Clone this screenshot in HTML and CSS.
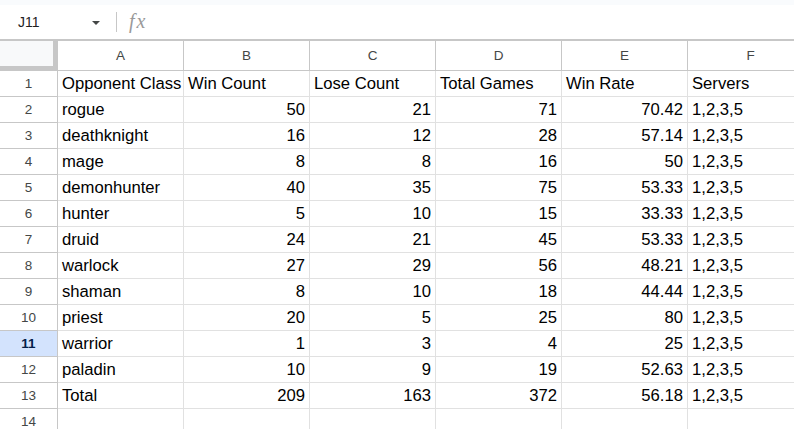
FILE: index.html
```html
<!DOCTYPE html>
<html lang="en">
<head>
    <meta charset="UTF-8">
    <title>Opponent Stats</title>
    <link rel="stylesheet" href="styles.css">
</head>
<body>
    <div class="top-strip"></div>
    <div class="formula-bar">
        <div class="name-box">J11</div>
        <div class="name-arrow"></div>
        <div class="bar-sep"></div>
        <div class="fx">fx</div>
    </div>
    <div class="sheet">
        <div class="corner"></div>
        <div class="col-head">A</div>
        <div class="col-head">B</div>
        <div class="col-head">C</div>
        <div class="col-head">D</div>
        <div class="col-head">E</div>
        <div class="col-head">F</div>

        <div class="row-head">1</div>
        <div class="cell">Opponent Class</div>
        <div class="cell">Win Count</div>
        <div class="cell">Lose Count</div>
        <div class="cell">Total Games</div>
        <div class="cell">Win Rate</div>
        <div class="cell">Servers</div>

        <div class="row-head">2</div>
        <div class="cell">rogue</div>
        <div class="cell num">50</div>
        <div class="cell num">21</div>
        <div class="cell num">71</div>
        <div class="cell num">70.42</div>
        <div class="cell">1,2,3,5</div>

        <div class="row-head">3</div>
        <div class="cell">deathknight</div>
        <div class="cell num">16</div>
        <div class="cell num">12</div>
        <div class="cell num">28</div>
        <div class="cell num">57.14</div>
        <div class="cell">1,2,3,5</div>

        <div class="row-head">4</div>
        <div class="cell">mage</div>
        <div class="cell num">8</div>
        <div class="cell num">8</div>
        <div class="cell num">16</div>
        <div class="cell num">50</div>
        <div class="cell">1,2,3,5</div>

        <div class="row-head">5</div>
        <div class="cell">demonhunter</div>
        <div class="cell num">40</div>
        <div class="cell num">35</div>
        <div class="cell num">75</div>
        <div class="cell num">53.33</div>
        <div class="cell">1,2,3,5</div>

        <div class="row-head">6</div>
        <div class="cell">hunter</div>
        <div class="cell num">5</div>
        <div class="cell num">10</div>
        <div class="cell num">15</div>
        <div class="cell num">33.33</div>
        <div class="cell">1,2,3,5</div>

        <div class="row-head">7</div>
        <div class="cell">druid</div>
        <div class="cell num">24</div>
        <div class="cell num">21</div>
        <div class="cell num">45</div>
        <div class="cell num">53.33</div>
        <div class="cell">1,2,3,5</div>

        <div class="row-head">8</div>
        <div class="cell">warlock</div>
        <div class="cell num">27</div>
        <div class="cell num">29</div>
        <div class="cell num">56</div>
        <div class="cell num">48.21</div>
        <div class="cell">1,2,3,5</div>

        <div class="row-head">9</div>
        <div class="cell">shaman</div>
        <div class="cell num">8</div>
        <div class="cell num">10</div>
        <div class="cell num">18</div>
        <div class="cell num">44.44</div>
        <div class="cell">1,2,3,5</div>

        <div class="row-head">10</div>
        <div class="cell">priest</div>
        <div class="cell num">20</div>
        <div class="cell num">5</div>
        <div class="cell num">25</div>
        <div class="cell num">80</div>
        <div class="cell">1,2,3,5</div>

        <div class="row-head active">11</div>
        <div class="cell">warrior</div>
        <div class="cell num">1</div>
        <div class="cell num">3</div>
        <div class="cell num">4</div>
        <div class="cell num">25</div>
        <div class="cell">1,2,3,5</div>

        <div class="row-head">12</div>
        <div class="cell">paladin</div>
        <div class="cell num">10</div>
        <div class="cell num">9</div>
        <div class="cell num">19</div>
        <div class="cell num">52.63</div>
        <div class="cell">1,2,3,5</div>

        <div class="row-head">13</div>
        <div class="cell">Total</div>
        <div class="cell num">209</div>
        <div class="cell num">163</div>
        <div class="cell num">372</div>
        <div class="cell num">56.18</div>
        <div class="cell">1,2,3,5</div>

        <div class="row-head">14</div>
        <div class="cell"></div>
        <div class="cell"></div>
        <div class="cell"></div>
        <div class="cell"></div>
        <div class="cell"></div>
        <div class="cell"></div>
    </div>
</body>
</html>
```

FILE: styles.css
```css
body {
    margin: 0;
    padding: 0;
    width: 794px;
    height: 429px;
    overflow: hidden;
    background-color: #ffffff;
    font-family: "Liberation Sans", Arial, sans-serif;
}
.top-strip {
    height: 5px;
    background-color: #f9fbfd;
}
.formula-bar {
    display: flex;
    align-items: center;
    height: 34px;
    border-bottom: 2px solid #c7c7c7;
    background-color: #ffffff;
}
.name-box {
    width: 74px;
    padding-left: 18px;
    font-size: 14px;
    color: #1f1f1f;
}
.name-arrow {
    width: 0;
    height: 0;
    border-left: 4px solid transparent;
    border-right: 4px solid transparent;
    border-top: 4px solid #444746;
    margin-top: 2px;
}
.bar-sep {
    width: 1px;
    height: 20px;
    margin-left: 16px;
    background-color: #c7c7c7;
}
.fx {
    margin-left: 12px;
    margin-bottom: 2px;
    font-family: "Liberation Serif", serif;
    font-style: italic;
    font-size: 20px;
    letter-spacing: 2px;
    color: #9a9a9a;
}
.sheet {
    display: grid;
    grid-template-columns: 58px repeat(6, 126px);
    grid-template-rows: 30px;
    grid-auto-rows: 26px;
}
.corner {
    background-color: #f8f9fa;
    border-right: 5px solid #c7c7c7;
    border-bottom: 5px solid #c7c7c7;
}
.col-head {
    display: flex;
    align-items: center;
    justify-content: center;
    font-size: 13.5px;
    color: #444746;
    border-right: 1px solid #c7c7c7;
    border-bottom: 1px solid #c7c7c7;
}
.row-head {
    display: flex;
    align-items: center;
    justify-content: center;
    font-size: 13.5px;
    color: #444746;
    border-right: 1px solid #c7c7c7;
    border-bottom: 1px solid #c7c7c7;
}
.row-head.active {
    background-color: #d3e3fd;
    color: #041e49;
    font-weight: bold;
}
.cell {
    padding: 0 4px;
    font-size: 16.67px;
    line-height: 26px;
    color: #000000;
    white-space: nowrap;
    overflow: hidden;
    border-right: 1px solid #e1e1e1;
    border-bottom: 1px solid #e1e1e1;
}
.cell.num {
    text-align: right;
}
```
